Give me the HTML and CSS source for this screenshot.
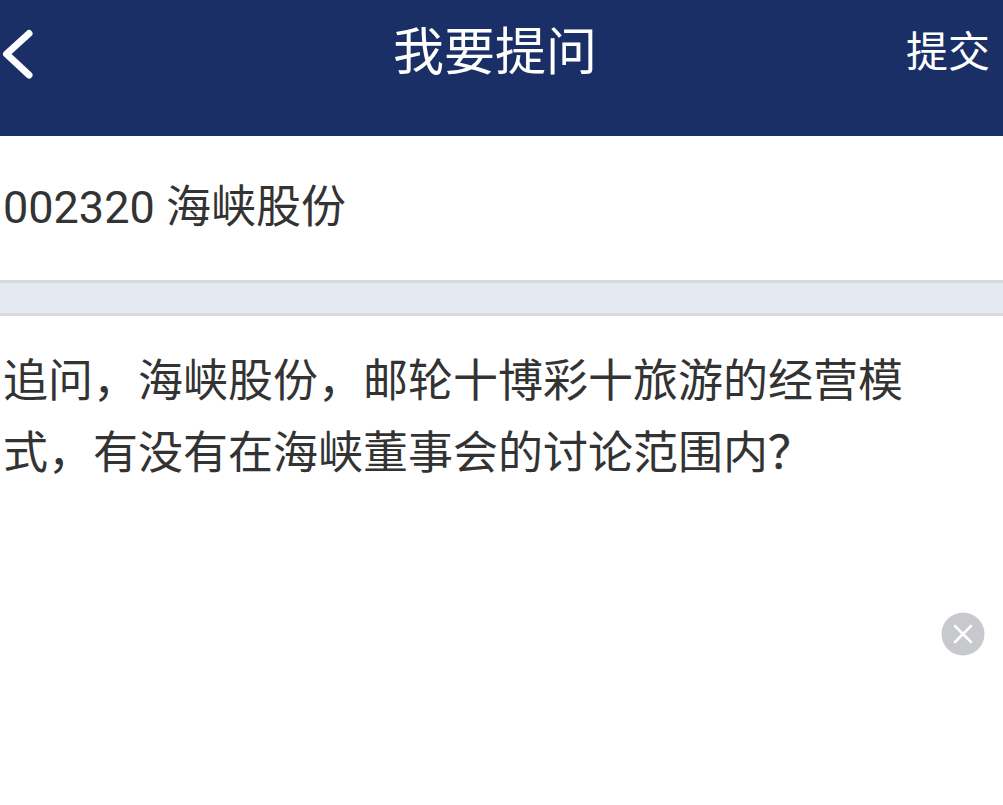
FILE: index.html
```html
<!DOCTYPE html>
<html lang="zh-CN">
<head>
    <meta charset="utf-8">
    <title>我要提问</title>
    <link rel="stylesheet" href="styles.css">
</head>
<body>
    <div class="header">
        <a class="back">
            <svg width="40" height="56" viewBox="0 0 40 56">
                <path d="M29 7.5 L6.5 28 L29 49" />
            </svg>
        </a>
        <h1>我要提问</h1>
        <a class="submit">提交</a>
    </div>
    <div class="stock">002320 海峡股份</div>
    <div class="divider"></div>
    <div class="question">
        <p>追问，海峡股份，邮轮十博彩十旅游的经营模式，有没有在海峡董事会的讨论范围内<span class="mark">？</span></p>
        <div class="clear">
            <svg width="44" height="44" viewBox="0 0 44 44">
                <circle cx="22" cy="22" r="21.5" />
                <path d="M14 14 L30 30 M30 14 L14 30" />
            </svg>
        </div>
    </div>
</body>
</html>
```

FILE: styles.css
```css
body {
    margin: 0;
    font-family: Roboto, "Noto Sans CJK SC", sans-serif;
    font-size: 45px;
    color: #333;
    background-color: #fff;
}
.header {
    display: grid;
    grid-template-columns: 120px 1fr 120px;
    height: 136px;
    background-color: #1b2f67;
    color: #fff;
}
.back {
    padding-top: 26px;
}
.back svg {
    display: block;
}
.back path {
    fill: none;
    stroke: #fff;
    stroke-width: 7;
    stroke-linecap: round;
    stroke-linejoin: round;
}
h1 {
    margin: 0;
    padding-right: 13px;
    font-size: 51px;
    font-weight: normal;
    line-height: 106px;
    text-align: center;
}
.submit {
    padding-right: 13px;
    font-size: 42px;
    line-height: 106px;
    text-align: right;
}
.stock {
    height: 144px;
    padding-left: 3px;
    line-height: 144px;
}
.divider {
    box-sizing: border-box;
    height: 36px;
    border-top: 3px solid #d9dadc;
    border-bottom: 3px solid #d9dadc;
    background-color: #e4e9f2;
}
.question p {
    margin: 0;
    padding: 30px 90px 0 3px;
    height: 266px;
    line-height: 72px;
}
.mark {
    -webkit-text-stroke: 0.5px #333;
}
.clear {
    display: flex;
    justify-content: flex-end;
    padding-right: 18px;
}
.clear circle {
    fill: #c8c9cc;
}
.clear path {
    fill: none;
    stroke: #fff;
    stroke-width: 2.5;
    stroke-linecap: round;
}
```
